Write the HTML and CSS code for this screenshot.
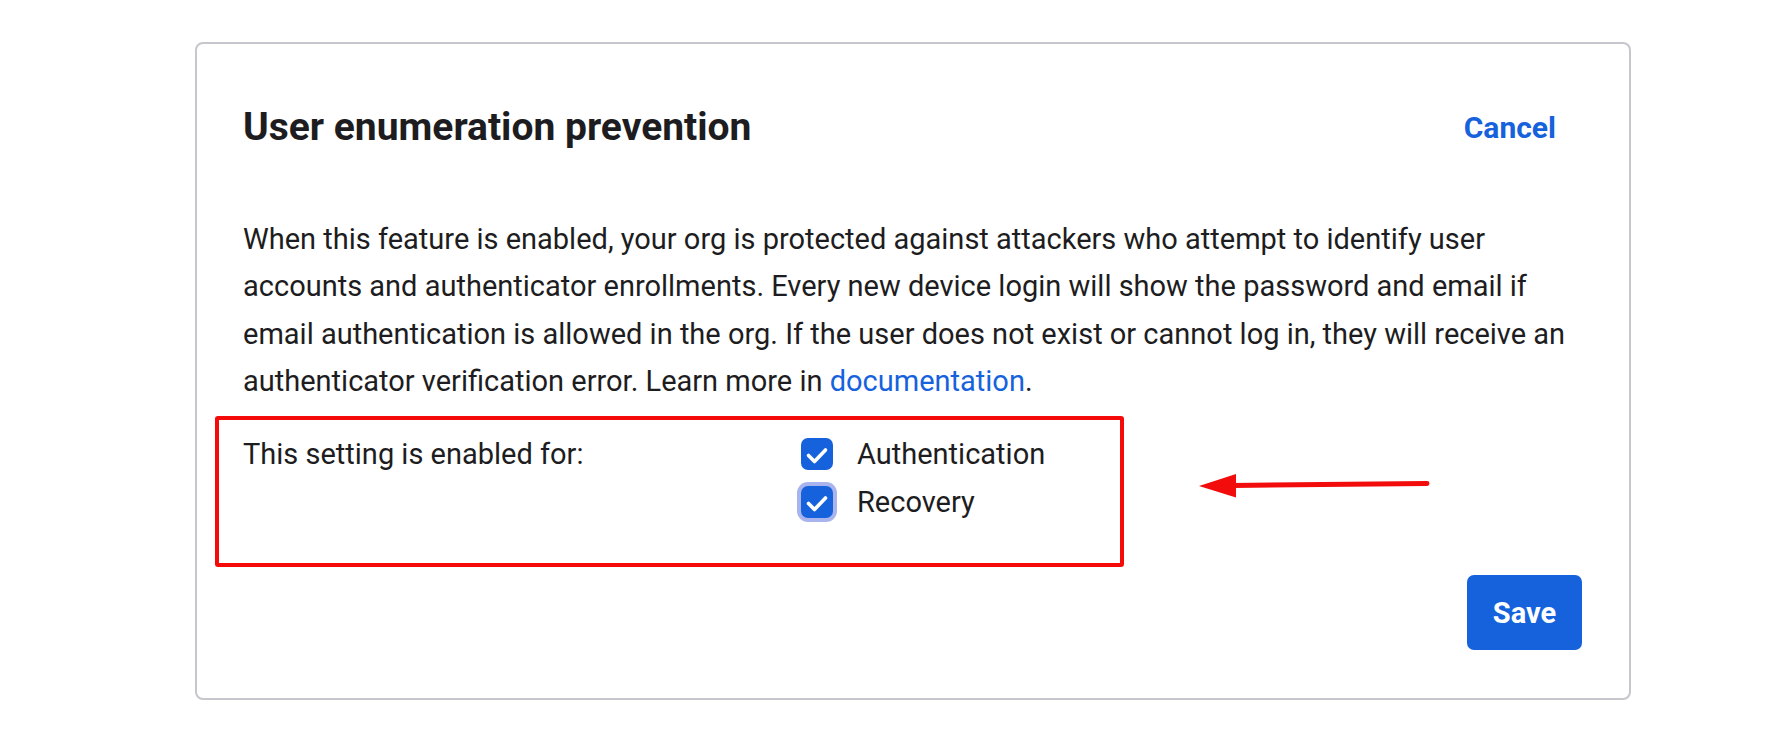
FILE: index.html
```html
<!DOCTYPE html>
<html lang="en">
<head>
  <meta charset="UTF-8">
  <meta name="viewport" content="width=device-width, initial-scale=1.0">
  <title>User enumeration prevention</title>
  <link rel="stylesheet" href="styles.css">
</head>
<body>

  <!-- settings card -->
  <div class="card">
    <div class="card-header">
      <h2 class="card-title">User enumeration prevention</h2>
      <a class="cancel-link" href="#">Cancel</a>
    </div>

    <p class="card-text">
      When this feature is enabled, your org is protected against attackers who attempt to identify user<br>
      accounts and authenticator enrollments. Every new device login will show the password and email if<br>
      email authentication is allowed in the org. If the user does not exist or cannot log in, they will receive an<br>
      authenticator verification error. Learn more in <a class="doc-link" href="#">documentation</a>.
    </p>

    <!-- highlighted setting row -->
    <div class="setting-row">
      <div class="setting-label">This setting is enabled for:</div>
      <div class="setting-options">
        <label class="option">
          <span class="checkbox">
            <svg viewBox="0 0 32 32" width="32" height="32"><path d="M7.5 17.5l6 6 11-11.5" fill="none" stroke="#fff" stroke-width="3.6" stroke-linecap="round" stroke-linejoin="round"/></svg>
          </span>
          Authentication
        </label>
        <label class="option">
          <span class="checkbox focused">
            <svg viewBox="0 0 32 32" width="32" height="32"><path d="M7.5 17.5l6 6 11-11.5" fill="none" stroke="#fff" stroke-width="3.6" stroke-linecap="round" stroke-linejoin="round"/></svg>
          </span>
          Recovery
        </label>
      </div>
    </div>

    <div class="card-footer">
      <button class="save-button">Save</button>
    </div>

    <!-- annotation arrow -->
    <svg class="arrow" width="240" height="45" viewBox="0 0 240 45">
      <line x1="38" y1="20.5" x2="232" y2="18.5" stroke="#f20c0c" stroke-width="5" stroke-linecap="round"/>
      <polygon points="4,21 41,9 41,32.5" fill="#f20c0c"/>
    </svg>
  </div>

</body>
</html>
```

FILE: styles.css
```css
body {
  margin: 0;
  background-color: #ffffff;
  font-family: Roboto, "Liberation Sans", sans-serif;
  color: #1d1d21;
}

.card {
  position: relative;
  box-sizing: border-box;
  width: 1436px;
  margin: 42px 0 0 195px;
  padding: 65px 47px 48px 46px;
  border: 2px solid #c6c6cc;
  border-radius: 8px;
}

.card-header {
  display: flex;
  justify-content: space-between;
  align-items: center;
  height: 36px;
}

.card-title {
  margin: 0;
  font-size: 39px;
  font-weight: 700;
  line-height: 36px;
}

.cancel-link {
  margin-right: 26px;
  color: #1662dd;
  font-size: 30px;
  font-weight: 700;
  text-decoration: none;
}

.card-text {
  margin: 71px 0 11px;
  font-size: 29px;
  line-height: 47.3px;
}

.doc-link {
  color: #1662dd;
  text-decoration: none;
}

.setting-row {
  display: grid;
  grid-template-columns: 558px 1fr;
  box-sizing: border-box;
  width: 909px;
  margin-left: -28px;
  padding: 10px 0 37px 24px;
  border: 4px solid #f50a0a;
  border-radius: 3px;
  font-size: 29px;
}

.setting-label {
  line-height: 48px;
}

.setting-options {
  display: flex;
  flex-direction: column;
}

.option {
  display: flex;
  align-items: center;
  gap: 24px;
  height: 48px;
}

.checkbox {
  display: flex;
  width: 32px;
  height: 32px;
  border-radius: 7px;
  background-color: #1662dd;
}

.checkbox.focused {
  box-shadow: 0 0 0 4px #a9b4ee;
}

.card-footer {
  display: flex;
  justify-content: flex-end;
  margin-top: 8px;
}

.save-button {
  width: 115px;
  height: 75px;
  border: none;
  border-radius: 7px;
  background-color: #1662dd;
  color: #ffffff;
  font-family: inherit;
  font-size: 29px;
  font-weight: 700;
}

.arrow {
  position: absolute;
  left: 998px;
  top: 421px;
}
```
